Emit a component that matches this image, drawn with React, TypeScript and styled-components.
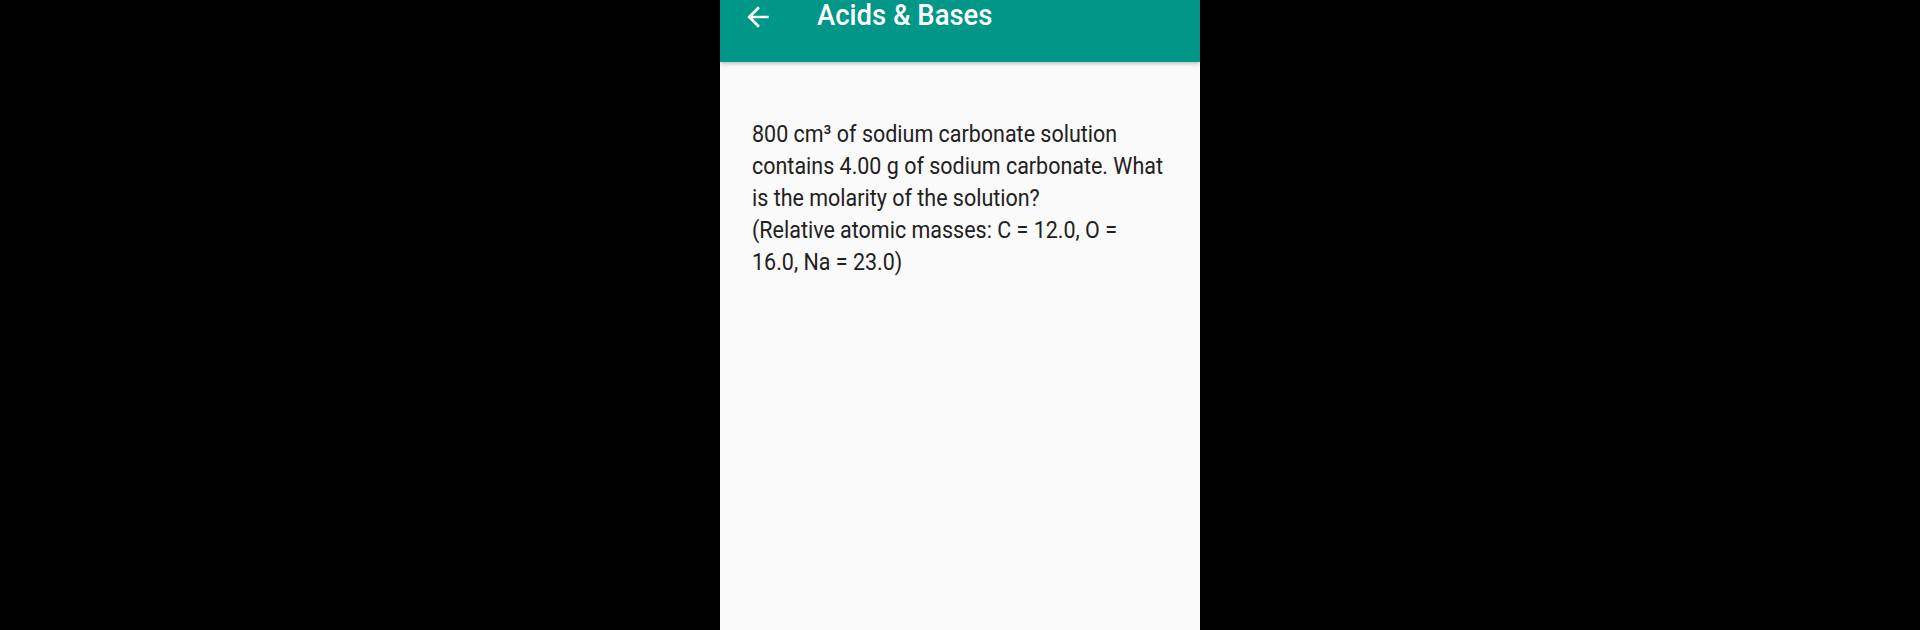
import styled, { createGlobalStyle } from "styled-components";

const GlobalStyle = createGlobalStyle`
  html, body {
    margin: 0;
    padding: 0;
    background: #000;
  }
  #root {
    height: 630px;
  }
`;

const teal = "#009688";
const narrow = 0.895;

const Stage = styled.div`
  display: flex;
  justify-content: center;
  height: 630px;
  background: #000;
  overflow: hidden;
`;

const Phone = styled.div`
  width: 480px;
  height: 100%;
  background: #fafafa;
  display: flex;
  flex-direction: column;
  font-family: Roboto, "Noto Sans", sans-serif;
  overflow: hidden;
`;

const AppBar = styled.header`
  height: 62px;
  flex-shrink: 0;
  background: ${teal};
  display: flex;
  align-items: flex-start;
  padding-left: 22px;
  box-shadow: 0 2px 4px rgba(0, 0, 0, 0.22);
  position: relative;
  z-index: 1;
`;

const BackButton = styled.button`
  border: none;
  background: none;
  padding: 0;
  margin-top: 1px;
  width: 32px;
  height: 32px;
  display: flex;
  color: #fff;
  cursor: pointer;

  svg {
    width: 32px;
    height: 32px;
  }
`;

const Title = styled.h1`
  margin: 0 0 0 43px;
  font-size: 30px;
  line-height: 30px;
  font-weight: 500;
  color: #fff;
  white-space: nowrap;
  transform: scaleX(0.915);
  transform-origin: left top;
`;

const Content = styled.main`
  padding: 56px 32px 0 32px;
`;

const Question = styled.p`
  margin: 0;
  width: ${Math.round(416 / narrow)}px;
  font-size: 24px;
  line-height: 32px;
  color: #212121;
  white-space: pre-line;
  transform: scaleX(${narrow});
  transform-origin: left top;
`;

const ArrowBack = () => (
  <svg viewBox="0 0 24 24" fill="currentColor">
    <path d="M20 11H7.83l5.59-5.59L12 4l-8 8 8 8 1.41-1.41L7.83 13H20v-2z" />
  </svg>
);

const App = () => {
  return (
    <>
      <GlobalStyle />
      <Stage>
        <Phone>
          <AppBar>
            <BackButton aria-label="Back">
              <ArrowBack />
            </BackButton>
            <Title>Acids &amp; Bases</Title>
          </AppBar>
          <Content>
            <Question>
              {"800 cm³ of sodium carbonate solution contains 4.00 g of sodium carbonate. What is the molarity of the solution?\n(Relative atomic masses: C = 12.0, O = 16.0, Na = 23.0)"}
            </Question>
          </Content>
        </Phone>
      </Stage>
    </>
  );
};

export default App;
